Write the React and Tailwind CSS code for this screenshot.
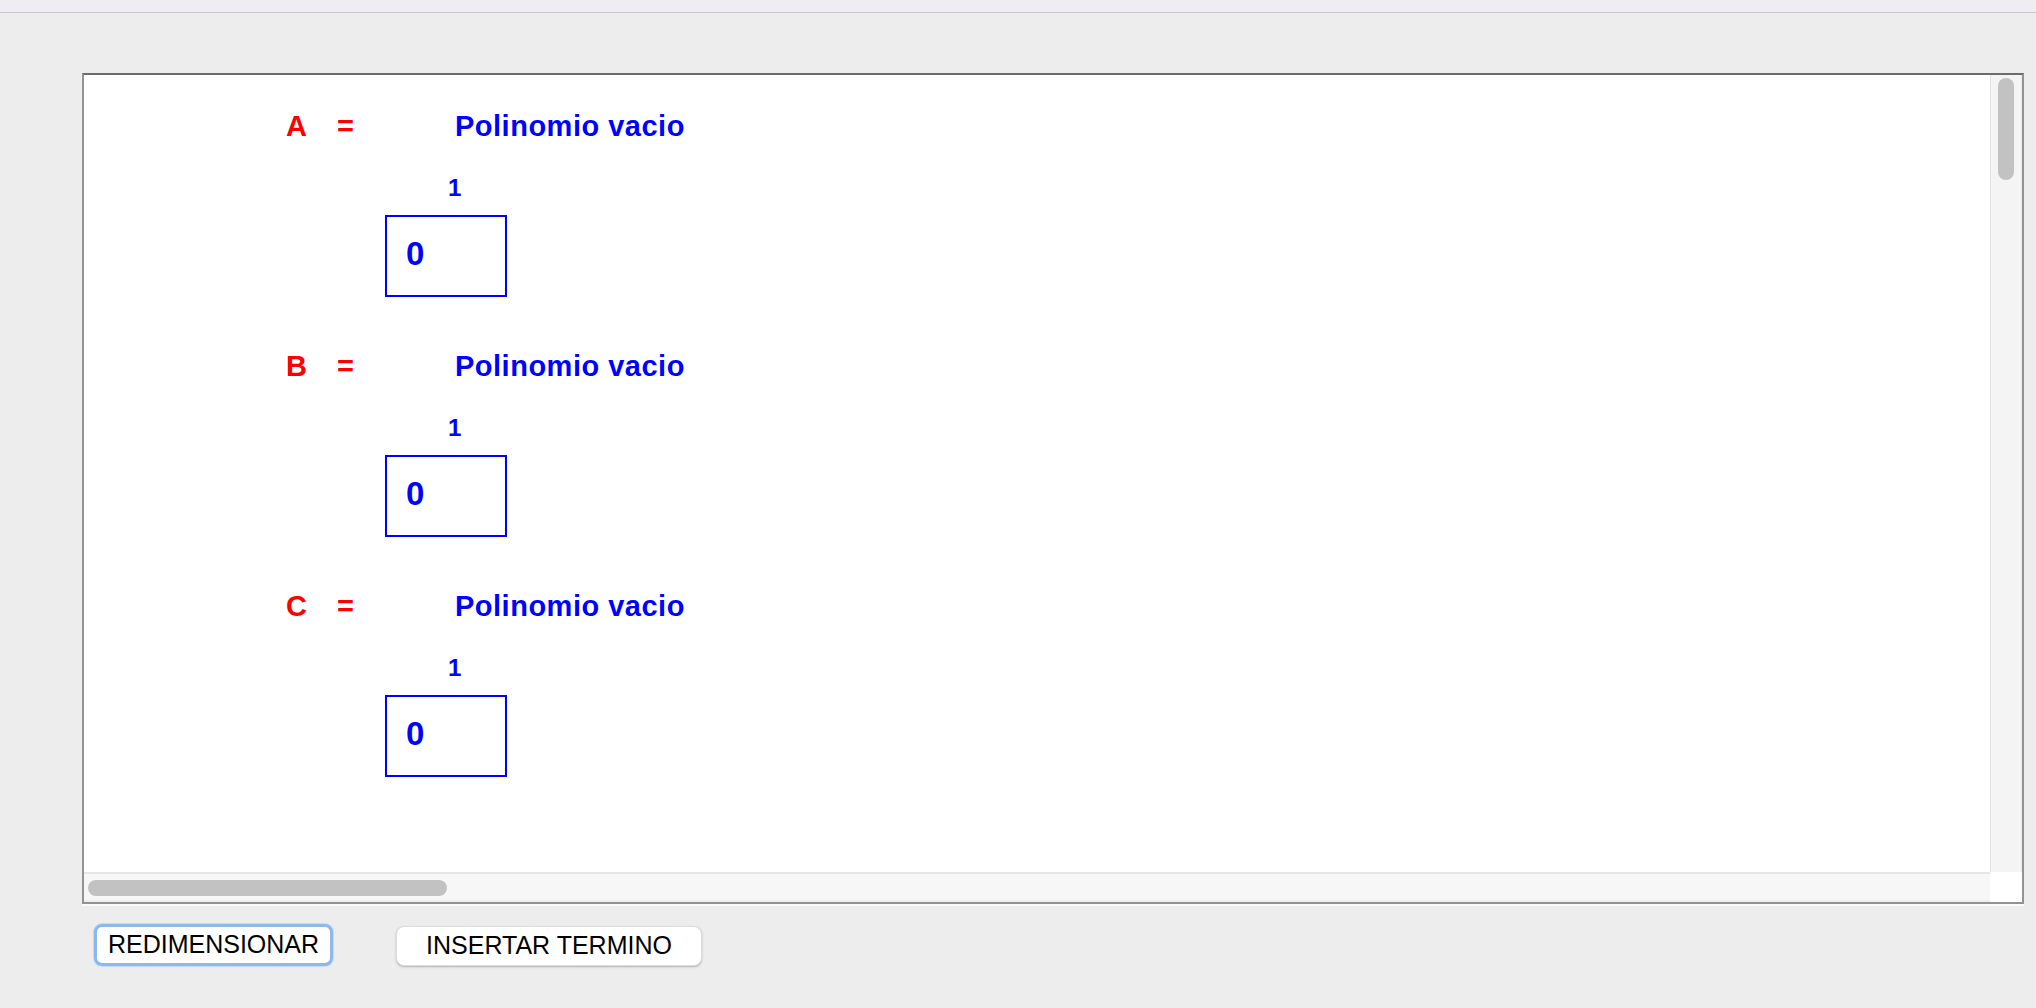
import React from 'react';

const polys = ['A', 'B', 'C'];

const Poly = ({ name }) => (
  <div className="flex flex-col">
    <div className="flex h-[30px] items-start text-[29px] leading-[30px] font-bold tracking-[0.5px]">
      <span className="w-[51px] text-[#ff0000]">{name}</span>
      <span className="w-[118px] text-[#ff0000]">=</span>
      <span className="text-[#0000ff]">Polinomio vacio</span>
    </div>
    <div className="mt-[35px] ml-[162px] h-[24px] text-[24px] leading-[24px] font-bold text-[#0000ff]">1</div>
    <div className="mt-[15px] ml-[99px] flex h-[82px] w-[122px] items-center border-2 border-[#0000ff] pb-[5px] pl-[19px] text-[33px] leading-none font-bold text-[#0000ff]">
      0
    </div>
  </div>
);

export default function App() {
  return (
    <div className="min-h-screen bg-[#ededed] font-['Liberation_Sans',Arial,sans-serif]">
      <div className="h-[13px] border-b border-[#c6c6ca] bg-[#efedf3]" />

      <div className="mt-[60px] ml-[82px] flex h-[831px] w-[1942px] flex-col border-2 border-[#939393] border-t-[#6c6c6c] bg-white shadow-[0_2px_0_#fafafa]">
        <div className="flex min-h-0 flex-1">
          <div className="flex flex-1 flex-col gap-[54px] overflow-hidden pt-[36px] pl-[202px]">
            {polys.map((p) => (
              <Poly key={p} name={p} />
            ))}
          </div>
          <div className="w-[32px] border-x border-l-[#e4e4e4] border-r-[#ebebeb] bg-[#f4f4f4] pt-[3px] pl-[7px]">
            <div className="h-[102px] w-[16px] rounded-full bg-[#c2c2c2]" />
          </div>
        </div>
        <div className="flex h-[30px]">
          <div className="flex-1 border-t-2 border-b-2 border-t-[#e6e6e6] border-b-[#efefef] bg-[#f7f7f7] pt-[6px] pl-[4px]">
            <div className="h-[16px] w-[359px] rounded-full bg-[#c2c2c2]" />
          </div>
          <div className="w-[32px] bg-white" />
        </div>
      </div>

      <div className="mt-[20px] ml-[94px] flex items-start gap-[63px]">
        <button className="flex h-[42px] w-[239px] items-center justify-center rounded-[8px] border-[3px] border-[#8cb8ee] bg-white text-[25px] text-black shadow-[0_0_0_1px_#c4dbf6]">
          REDIMENSIONAR
        </button>
        <button className="mt-[2px] flex h-[40px] w-[306px] items-center justify-center rounded-[8px] border border-[#dcdcdc] bg-white text-[25px] text-black shadow-[0_1px_2px_rgba(0,0,0,0.25)]">
          INSERTAR TERMINO
        </button>
      </div>
    </div>
  );
}
